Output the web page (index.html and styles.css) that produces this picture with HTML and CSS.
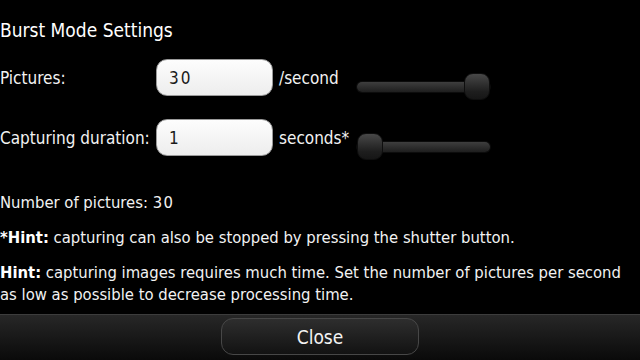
FILE: index.html
```html
<!DOCTYPE html>
<html>
<head>
<meta charset="utf-8">
<link rel="stylesheet" href="styles.css">
</head>
<body>
<div class="screen">
  <main class="content">
    <h1 class="title">Burst Mode Settings</h1>
    <div class="row row-first">
      <span class="label">Pictures:</span>
      <div class="field">30</div>
      <span class="unit">/second</span>
      <div class="slider"><div class="track"></div><div class="knob knob-end"></div></div>
    </div>
    <div class="row row-second">
      <span class="label">Capturing duration:</span>
      <div class="field">1</div>
      <span class="unit">seconds*</span>
      <div class="slider"><div class="track"></div><div class="knob knob-start"></div></div>
    </div>
    <p class="text text-count">Number of pictures: <span class="num">30</span></p>
    <p class="text"><b>*Hint:</b> capturing can also be stopped by pressing the shutter button.</p>
    <div class="text">
      <span class="line"><b>Hint:</b> capturing images requires much time. Set the number of pictures per second</span>
      <span class="line">as low as possible to decrease processing time.</span>
    </div>
  </main>
  <footer class="bar">
    <button class="btn">Close</button>
  </footer>
</div>
</body>
</html>
```
FILE: styles.css
```css
html, body {
  margin: 0;
  padding: 0;
  background: #000;
}
.screen {
  width: 640px;
  height: 360px;
  display: flex;
  flex-direction: column;
  font-family: "DejaVu Sans Condensed", "DejaVu Sans", sans-serif;
  color: #f2f2f2;
  overflow: hidden;
}
.content {
  flex: 1;
  padding-top: 18px;
}
.title {
  margin: 0;
  font-size: 19px;
  line-height: 24px;
  font-weight: normal;
  color: #fff;
}
.row {
  display: flex;
  align-items: center;
  height: 37px;
}
.row-first { margin-top: 17px; }
.row-second { margin-top: 23px; }
.label {
  width: 156px;
  font-size: 17px;
  flex: none;
}
.field {
  width: 117px;
  height: 37px;
  box-sizing: border-box;
  flex: none;
  border-radius: 11px;
  background: linear-gradient(#fdfdfd, #ededed);
  border: 1px solid #9a9a9a;
  color: #1a1a1a;
  font-size: 17px;
  letter-spacing: 2px;
  padding-left: 12px;
  display: flex;
  align-items: center;
}
.unit {
  width: 78px;
  margin-left: 6px;
  flex: none;
  font-size: 17px;
}
.slider {
  width: 133px;
  height: 27px;
  flex: none;
  margin-top: 18px;
  display: flex;
  align-items: center;
  position: relative;
}
.track {
  width: 100%;
  height: 10px;
  border-radius: 5px;
  background: linear-gradient(#3e3e3e, #1e1e1e);
  box-shadow: 0 0 0 1px #0c0c0c;
}
.knob {
  position: absolute;
  top: 0;
  width: 26px;
  height: 27px;
  box-sizing: border-box;
  border-radius: 9px;
  background: linear-gradient(#484848, #1e1e1e 70%, #161616);
  border: 1px solid #0e0e0e;
}
.knob-end { right: 0; }
.knob-start { left: 0; }
.text {
  margin: 13px 0 0;
  font-size: 16.5px;
  line-height: 22px;
}
.text-count { margin-top: 36px; }
.num { letter-spacing: 1.5px; }
.line { display: block; white-space: nowrap; }
.text b { font-weight: bold; color: #fff; }
.bar {
  height: 45px;
  flex: none;
  border-top: 1px solid #3c3c3c;
  background: linear-gradient(#272727, #0a0a0a);
  display: flex;
  justify-content: center;
  align-items: flex-start;
}
.btn {
  margin-top: 3px;
  width: 198px;
  height: 37px;
  border-radius: 12px;
  border: 1px solid #474747;
  background: linear-gradient(#2e2e2e, #121212);
  color: #f2f2f2;
  font-family: "DejaVu Sans Condensed", "DejaVu Sans", sans-serif;
  font-size: 19px;
  padding: 0;
}
```
